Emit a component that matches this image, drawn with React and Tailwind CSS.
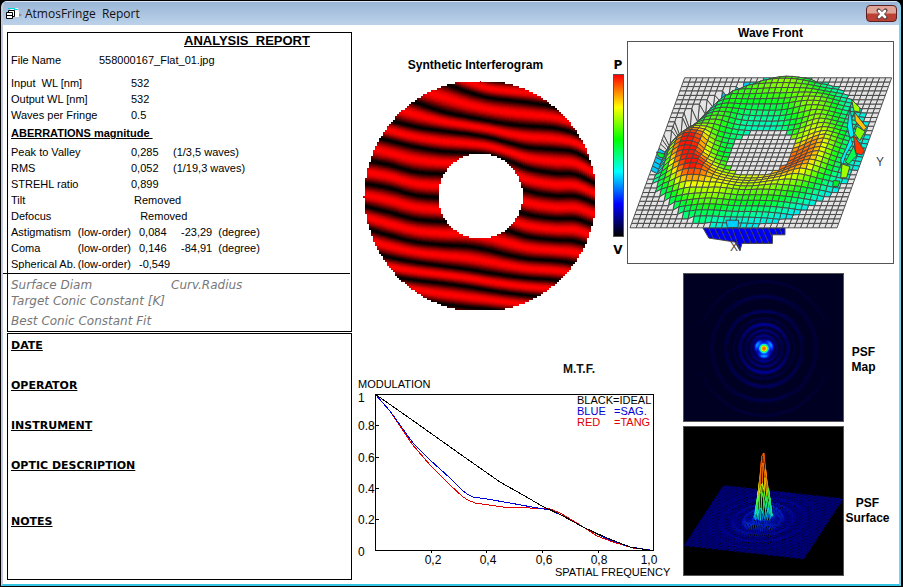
import { X } from "lucide-react"

const rgb = (c) => `rgb(${c.map((n) => Math.round(n)).join(",")})`

// linear interpolation in a list of [position, [r, g, b]] stops
function ramp(stops, v) {
  if (v <= stops[0][0]) return stops[0][1]
  for (let i = 1; i < stops.length; i++) {
    const [b, cb] = stops[i]
    const [a, ca] = stops[i - 1]
    if (v <= b) return ca.map((n, k) => n + ((cb[k] - n) * (v - a)) / (b - a))
  }
  return stops[stops.length - 1][1]
}

// smooth interpolation through unevenly spaced points
function spline(xs, ys, x) {
  let i = 0
  while (i < xs.length - 2 && x > xs[i + 1]) i++
  const slope = (k) => {
    const a = Math.max(0, k - 1)
    const b = Math.min(xs.length - 1, k + 1)
    return (ys[b] - ys[a]) / (xs[b] - xs[a])
  }
  const h = xs[i + 1] - xs[i]
  const t = (x - xs[i]) / h
  const t2 = t * t
  const t3 = t2 * t
  return (2 * t3 - 3 * t2 + 1) * ys[i] + (t3 - 2 * t2 + t) * h * slope(i) + (3 * t2 - 2 * t3) * ys[i + 1] + (t3 - t2) * h * slope(i + 1)
}

/* ---------- interferogram ---------- */

const fringeX = [30, 100, 180, 260, 340, 400, 460, 520, 600, 660, 720]
const fringes = [
  [-110, -70, -50, -20, 0, 20, 30, 38, 50, 66, 90],
  [-45, -10, 15, 40, 66, 88, 95, 100, 112, 130, 155],
  [20, 50, 75, 98, 128, 144, 152, 159, 172, 192, 220],
  [100, 128, 158, 186, 203, 214, 224, 230, 236, 252, 285],
  [185, 211, 232, 244, 254, 264, 280, 294, 300, 308, 342],
  [255, 273, 292, 305, 310, 316, 334, 357, 371, 375, 402],
  [332, 346, 367, 373, 374, 382, 402, 425, 439, 440, 460],
  [403, 415, 437, 445, 448, 458, 477, 496, 507, 508, 528],
  [470, 488, 509, 516, 518, 526, 544, 562, 571, 575, 595],
  [536, 557, 577, 586, 591, 602, 617, 628, 634, 642, 662],
  [603, 623, 638, 649, 660, 670, 679, 686, 692, 703, 720],
  [665, 680, 692, 701, 712, 722, 731, 738, 747, 759, 775],
  [725, 738, 750, 764, 774, 779, 786, 793, 802, 814, 828],
  [790, 800, 812, 824, 836, 840, 846, 853, 862, 872, 885],
]

const fringePaths = (() => {
  const levels = {}
  for (let x = 30; x < 723; x += 6) {
    const col = fringes.map((f) => spline(fringeX, f, x + 3))
    for (let y = 98; y < 782; y += 3) {
      // the outline steps in blocks of 6, the bands inside it in lines of 3
      const block = 98 + Math.floor((y - 98) / 6) * 6 + 3
      const r = Math.hypot(x + 3 - 376, block - 440)
      if (r > 347 || r < 127) continue
      const i = col.findIndex((f) => f > y + 1)
      const t = (y + 1 - col[i - 1]) / (col[i] - col[i - 1])
      const level = Math.round(Math.sin(Math.PI * t) ** 1.4 * 18)
      levels[level] = (levels[level] || "") + `M${x} ${y}h6v3h-6z`
    }
  }
  return Object.entries(levels)
})()

function Interferogram() {
  return (
    <svg viewBox="24 94 699 690" className="w-full" shapeRendering="crispEdges">
      {fringePaths.map(([level, d]) => (
        <path key={level} d={d} fill={rgb([Math.min(255, level * 14.2), 0, 0])} />
      ))}
      <path d="M375 94h3v6h-3zM24 438h8v6h-8z" fill="#c00" />
    </svg>
  )
}

/* ---------- wave front ---------- */

const waveStops = [
  [-90, [0, 110, 255]],
  [-35, [0, 170, 255]],
  [0, [0, 235, 245]],
  [14, [0, 255, 150]],
  [28, [0, 255, 30]],
  [44, [130, 255, 0]],
  [58, [240, 255, 0]],
  [70, [255, 160, 0]],
  [88, [255, 20, 0]],
]

const radii = [0.17, 0.25, 0.32, 0.39, 0.45, 0.5]
// one row for every 30 degrees, counter-clockwise from the right
const heights = [
  [76, 74, 52, 24, 8, 0],
  [44, 54, 42, 22, 8, 0],
  [16, 32, 46, 40, 20, 6],
  [6, 18, 32, 44, 44, 10],
  [8, 14, 24, 32, 26, -60],
  [16, 28, 40, 24, -40, -110],
  [20, 52, 88, 84, 20, -80],
  [30, 66, 92, 76, 36, 14],
  [50, 60, 56, 44, 28, 12],
  [56, 50, 36, 22, 8, -8],
  [64, 60, 42, 26, 10, -6],
  [78, 78, 58, 30, 12, -4],
]

function waveHeight(u, v) {
  const r = Math.hypot(u - 0.5, v - 0.5)
  if (r < 0.17 || r > 0.49) return null
  const a = ((Math.atan2(v - 0.5, u - 0.5) / Math.PI) * 6 + 12) % 12
  const k = Math.floor(a) % 12
  const lo = spline(radii, heights[k], r)
  const hi = spline(radii, heights[(k + 1) % 12], r)
  const t = a - Math.floor(a)
  const s = t * t * (3 - 2 * t)
  return lo + (hi - lo) * s
}

const waveCells = (() => {
  const n = 34
  const cells = []
  const point = (i, j) => {
    const u = i / n
    const v = j / n
    const h = waveHeight(u, v)
    const inner = Math.min(1, Math.max(0.05, (Math.hypot(u - 0.5, v - 0.5) - 0.16) / 0.14))
    return { x: 28 + u * 625 + v * 165, y: 625 - v * 453 - (h || 0) * 0.55 * inner, h }
  }
  for (let j = n - 1; j >= 0; j--) {
    for (let i = n - 1; i >= 0; i--) {
      const q = [point(i, j), point(i + 1, j), point(i + 1, j + 1), point(i, j + 1)]
      const inside = q.filter((p) => p.h !== null)
      const mean = inside.reduce((s, p) => s + p.h, 0) / (inside.length || 1)
      const flat = inside.length < 2 || (inside.length < 4 && mean < -25)
      cells.push({
        points: q.map((p) => `${p.x.toFixed(1)},${p.y.toFixed(1)}`).join(" "),
        fill: flat ? "#e4e4e4" : rgb(ramp(waveStops, mean)),
      })
    }
  }
  return cells
})()

function WaveFront() {
  return (
    <svg viewBox="22 64 800 667" className="w-full border border-[#555]">
      <g stroke="#444" strokeWidth="3" strokeLinejoin="round">
        <path fill="#0000f0" d="M248 625L266 656L300 661L345 668L360 694L366 672H458V646H496V625Z" />
        <path d="M265 625l16 34M283 625l18 36M301 625l18 40M319 625l18 40M337 625l23 69M355 625l20 46M373 625l20 46M391 625l20 46M409 625l20 46M427 625l20 46M445 625l13 30M463 625l10 20M479 625l9 20" />
        {waveCells.map((c, i) => (
          <polygon key={i} points={c.points} fill={c.fill} strokeWidth="2.8" />
        ))}
        <path fill="#a0ff00" d="M697 238L722 262V276L704 272Z" />
        <path fill="#ffc000" d="M706 276L742 322L734 332L708 302Z" />
        <path fill="#80ff00" d="M712 318L738 334L722 362L706 340Z" />
        <path fill="#ff3800" d="M702 342L736 392L728 405L710 400Z" />
        <path fill="#00f0ff" d="M692 262L704 345L692 356L684 320Z" />
        <path fill="#00f0ff" d="M694 350L700 372L682 400L668 440L664 420L680 385Z" />
        <path fill="#00ff50" d="M704 378L712 408L688 432L678 426Z" />
        <path fill="#a0ff00" d="M668 432L692 440L682 474L664 474Z" />
        <path fill="#00f030" d="M642 482L662 484L656 500L640 500Z" />
        <path fill="#00f030" d="M108 396L132 402L130 414L116 412Z" />
        <path fill="#00d0ff" d="M318 602H356L354 624H322Z" />
      </g>
      <g fill="#444" fontFamily="Liberation Sans, sans-serif" fontSize="36">
        <text x="771" y="437">Y</text>
        <text x="330" y="696">X</text>
      </g>
    </svg>
  )
}

/* ---------- point spread function ---------- */

const psfStops = [
  [0, [0, 0, 34]],
  [0.1, [0, 0, 150]],
  [0.2, [0, 60, 255]],
  [0.32, [0, 225, 255]],
  [0.5, [40, 255, 60]],
  [0.66, [220, 255, 0]],
  [0.8, [255, 150, 0]],
  [1, [255, 90, 0]],
]

// radius, strength, width
const rings = [
  [13, 0.09, 1.8],
  [18, 0.08, 1.6],
  [24, 0.1, 2],
  [30, 0.03, 1.6],
  [38, 0.05, 2.2],
  [53, 0.03, 2.4],
  [68, 0.015, 2],
]

function psf(x, y, core) {
  const r = Math.hypot(x, y)
  const a = Math.atan2(y, x)
  let v = Math.exp(-((r / core) ** 2))
  v += 0.25 * Math.exp(-(((r - 8) / 2.2) ** 2)) * (0.68 + 0.32 * Math.cos(3 * (a - Math.PI / 2)))
  for (const [radius, strength, width] of rings) {
    v += strength * Math.exp(-(((r - radius) / width) ** 2)) * (0.75 + 0.25 * Math.cos(2 * a + Math.PI))
  }
  return v
}

const psfMapPaths = (() => {
  const colours = {}
  for (let x = 0; x < 161; x += 1) {
    for (let y = 0; y < 149; y += 1) {
      const v = Math.round(psf(x + 0.5 - 81, y + 0.5 - 75.5, 4) * 60) / 60
      if (v < 0.01) continue
      const fill = rgb(ramp(psfStops, v))
      colours[fill] = (colours[fill] || "") + `M${x} ${y}h1v1h-1z`
    }
  }
  return Object.entries(colours)
})()

function PsfMap() {
  return (
    <svg viewBox="0 0 161 149" className="w-[161px] bg-[#000022] border border-[#555]" shapeRendering="crispEdges">
      {psfMapPaths.map(([fill, d]) => (
        <path key={fill} d={d} fill={fill} />
      ))}
    </svg>
  )
}

const psfCells = (() => {
  const n = 64
  const cells = []
  const point = (i, j) => {
    const u = i / n
    const v = j / n
    const z = psf((u - 0.495) * 160, (v - 0.5) * 150, 6)
    const ripple = Math.sin(i * 2.1 + j * 1.3) * 2
    return { x: 145 + u * 360 - v * 118, y: 200 + u * 40 + v * 180 - z * 215 + ripple, z }
  }
  for (let j = 0; j < n; j++) {
    for (let i = 0; i < n; i++) {
      const q = [point(i, j), point(i + 1, j), point(i + 1, j + 1), point(i, j + 1)]
      const z = Math.max(...q.map((p) => p.z))
      cells.push({
        points: q.map((p) => `${p.x.toFixed(1)},${p.y.toFixed(1)}`).join(" "),
        stroke: rgb(ramp(psfStops, z + 0.08)),
      })
    }
  }
  return cells
})()

function PsfSurface() {
  return (
    <svg viewBox="25 22 481 447" className="w-[161px] bg-black border border-[#555]">
      <g strokeWidth="2.6" fill="#000">
        {psfCells.map((c, i) => (
          <polygon key={i} points={c.points} stroke={c.stroke} />
        ))}
      </g>
    </svg>
  )
}

/* ---------- modulation transfer function ---------- */

function MtfChart() {
  return (
    <svg viewBox="0 0 320 220" className="w-[320px]" fontFamily="Liberation Sans, sans-serif" fontSize="12">
      <text x="208" y="12" fontWeight="bold" fill="#111">M.T.F.</text>
      <text x="3" y="27" fontSize="11">MODULATION</text>
      <g fill="none" stroke="#000" shapeRendering="crispEdges">
        <path d="M20.5 33.5h278v156h-278z" />
        <path d="M20 64.5h4M20 96.5h4M20 127.5h4M20 158.5h4M76.5 189v3M131.5 189v3M187.5 189v3M243.5 189v3" />
        <path stroke="#e00000" d="M20 33L35 50L57 83L75 104L95 124L108 136L113 139L120 142L148 146L175 147L195 148L205 152L222 162L242 175L258 181L278 187L295 189" />
        <path stroke="#0000d8" d="M20 33L35 50L58 82L75 99L95 117L107 129L112 133L118 136L132 138L155 142L177 146L195 149L208 155L228 166L250 177L275 186L295 189" />
        <path stroke="#000" d="M20 33L60 61L105 93L145 121L168 134L187 145L208 155L228 166L252 177L275 186L293 189" />
      </g>
      <g fontSize="12">
        <text x="3" y="41">1</text>
        <text x="3" y="69">0.8</text>
        <text x="3" y="101">0.6</text>
        <text x="3" y="132">0.4</text>
        <text x="3" y="163">0.2</text>
        <text x="3" y="195">0</text>
      </g>
      <g fontSize="12" textAnchor="middle">
        <text x="78" y="203">0,2</text>
        <text x="133" y="203">0,4</text>
        <text x="189" y="203">0,6</text>
        <text x="244" y="203">0,8</text>
        <text x="294" y="203">1,0</text>
      </g>
      <text x="200" y="215" fontSize="11">SPATIAL FREQUENCY</text>
      <g fontSize="11">
        <text x="222" y="43">BLACK=IDEAL</text>
        <text x="222" y="54" fill="#0000d8">BLUE</text>
        <text x="259" y="54" fill="#0000d8">=SAG.</text>
        <text x="222" y="65" fill="#e00000">RED</text>
        <text x="259" y="65" fill="#e00000">=TANG</text>
      </g>
    </svg>
  )
}

/* ---------- report ---------- */

const setup = [
  ["Input  WL [nm]", "532"],
  ["Output WL [nm]", "532"],
  ["Waves per Fringe", "0.5"],
]

const aberrations = [
  ["Peak to Valley", "", "0,285", "(1/3,5 waves)"],
  ["RMS", "", "0,052", "(1/19,3 waves)"],
  ["STREHL ratio", "", "0,899", ""],
  ["Tilt", "", " Removed", ""],
  ["Defocus", "", "   Removed", ""],
  ["Astigmatism", "(low-order)", "0,084", "-23,29  (degree)"],
  ["Coma", "(low-order)", "0,146", "-84,91  (degree)"],
  ["Spherical Ab.", "(low-order)", "-0,549", ""],
]

function Row({ name, order, value, extra }) {
  return (
    <tr className="h-4 whitespace-pre">
      <th scope="row" className="w-[120px] p-0 font-normal text-left">
        <span className="flex justify-between">
          <span>{name}</span>
          <span>{order}</span>
        </span>
      </th>
      <td className={order ? "w-[42px] p-0 pl-2" : "w-[42px] p-0"}>{value}</td>
      <td className={order ? "p-0 pl-2" : "p-0"}>{extra}</td>
    </tr>
  )
}

function Report() {
  return (
    <section className="border border-black pl-[3px] h-[300px] text-[11px] leading-4">
      <h1 className="pl-[173px] text-[13px] leading-4 font-bold underline whitespace-pre">ANALYSIS  REPORT</h1>
      <p className="mt-[3px] flex">
        <span className="w-[88px]">File Name</span>
        <span>558000167_Flat_01.jpg</span>
      </p>
      <table className="mt-[7px] border-collapse table-fixed w-full">
        <tbody>
          {setup.map(([name, value]) => (
            <Row key={name} name={name} value={value} />
          ))}
        </tbody>
      </table>
      <h2 className="mt-[2px] font-bold underline whitespace-pre">ABERRATIONS magnitude </h2>
      <table className="mt-[3px] border-collapse table-fixed w-full">
        <tbody>
          {aberrations.map(([name, order, value, extra]) => (
            <Row key={name} name={name} order={order} value={value} extra={extra} />
          ))}
        </tbody>
      </table>
      <hr className="border-black -ml-2 mt-px mr-px" />
      <div className="pt-[3px] italic text-[12px] text-[#777] font-['DejaVu_Sans',sans-serif]">
        <p className="flex">
          <span className="w-[160px]">Surface Diam</span>
          <span>Curv.Radius</span>
        </p>
        <p>Target Conic Constant [K]</p>
        <p className="mt-1">Best Conic Constant Fit</p>
      </div>
    </section>
  )
}

function Details() {
  return (
    <section className="mt-px border border-black pl-[3px] pt-1 h-[247px] text-[11px] font-bold underline font-['DejaVu_Sans',sans-serif]">
      <h2 className="h-10">DATE</h2>
      <h2 className="h-10">OPERATOR</h2>
      <h2 className="h-10">INSTRUMENT</h2>
      <h2 className="h-14">OPTIC DESCRIPTION</h2>
      <h2>NOTES</h2>
    </section>
  )
}

function App() {
  return (
    <div className="min-h-screen bg-black pl-px pt-px pr-[2px] pb-px text-black font-['Liberation_Sans',Arial,sans-serif]">
      <div className="rounded-t-md bg-white border-l-2 border-l-[#c3cbe0] border-r-2 border-r-[#74d3ee] border-b-2 border-b-[#35c3e2] overflow-hidden">
        <header className="flex items-center h-6 pl-[3px] pr-[2px] border-t border-t-[#dbe6f3] bg-linear-to-b from-[#9ab5d6] to-[#bcd2ea]">
          <svg viewBox="0 0 16 14" className="w-4 h-[14px]">
            <path d="M4 1h8l2 9H6z" fill="#fff" />
            <path d="M2 1h7v1H2zM8 2h4v1H8z" fill="#00d8e8" />
            <path d="M13 6l3 2-3 2z" fill="#8a8f98" />
            <path d="M2.500 5.500V3.500h6v6h-2M.5 5.500h6v6h-6zM.5 8.500h6" fill="#fff" stroke="#000" />
          </svg>
          <span className="ml-[3px] text-[12px] whitespace-pre font-['Open_Sans',sans-serif] text-[#111]">AtmosFringe  Report</span>
          <button
            aria-label="Close"
            className="ml-auto w-[31px] h-[17px] rounded-sm border border-[#5a2020] bg-linear-to-b from-[#dfa497] from-45% to-[#bd4034] to-55% grid place-items-center"
          >
            <span className="relative grid place-items-center">
              <X size={14} strokeWidth={7} color="#5c4444" />
              <X size={12} strokeWidth={5} color="#fff" className="absolute" />
            </span>
          </button>
        </header>

        <main className="pl-1 grid grid-cols-[345fr_275fr_56fr_216fr] grid-rows-[auto_auto_1fr]">
          <div className="row-span-3 pt-[7px] pb-1">
            <Report />
            <Details />
          </div>

          <section className="row-span-2 flex items-start gap-[14px] pl-[11px] pr-px pt-8">
            <div className="flex-1">
              <h2 className="text-[12px] leading-4 font-bold text-center pr-2">Synthetic Interferogram</h2>
              <div className="pt-2">
                <Interferogram />
              </div>
            </div>
            <div className="w-4 flex flex-col items-center text-[12px] leading-4 font-bold font-['DejaVu_Sans',sans-serif]">
              <span>P</span>
              <div className="w-[11px] h-[163px] my-px border border-[#555] bg-[linear-gradient(red,yellow_20%,lime_40%,cyan_60%,blue_80%,black)]" />
              <span className="pt-1">V</span>
            </div>
          </section>

          <section className="col-span-2 pr-[5px]">
            <h2 className="text-[12px] leading-4 font-bold text-center pl-5">Wave Front</h2>
            <WaveFront />
          </section>

          <section className="col-start-4 row-start-2 row-span-2 pt-[9px] flex flex-col gap-1 text-[12px] leading-[15px] font-bold text-center">
            <div className="flex items-center">
              <PsfMap />
              <h2 className="flex-1 pr-4 pt-6">PSF<br />Map</h2>
            </div>
            <div className="flex items-center">
              <PsfSurface />
              <h2 className="flex-1 pr-2 pt-5">PSF<br />Surface</h2>
            </div>
          </section>

          <section className="col-start-2 col-span-2 row-start-3 self-end pl-[3px] pb-[3px]">
            <MtfChart />
          </section>
        </main>
      </div>
    </div>
  )
}

export default App
